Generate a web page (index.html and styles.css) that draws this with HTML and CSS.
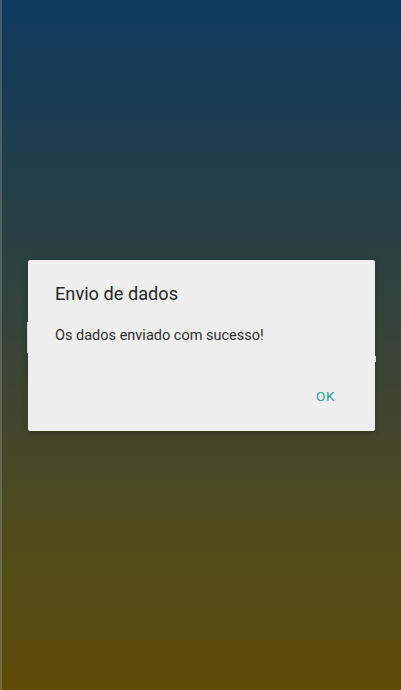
FILE: index.html
```html
<!DOCTYPE html>
<html lang="pt">
<head>
<meta charset="utf-8">
<title>Envio de dados</title>
<link rel="stylesheet" href="styles.css">
</head>
<body>
<main class="screen">
  <div class="field field-a"></div>
  <div class="field field-b"></div>
</main>
<div class="dialog" role="dialog">
  <h1 class="dialog-title">Envio de dados</h1>
  <p class="dialog-message">Os dados enviado com sucesso!</p>
  <div class="dialog-actions">
    <button class="dialog-button">OK</button>
  </div>
</div>
</body>
</html>
```
FILE: styles.css
```css
html, body {
  margin: 0;
  padding: 0;
  height: 100%;
}
body {
  font-family: Roboto, "Noto Sans", sans-serif;
  background: linear-gradient(to bottom, #0f3a5f 0%, #1d3d50 18%, #2b4240 38%, #3f4530 58%, #534c17 82%, #5f4b07 100%);
  box-shadow: inset 2px 0 0 rgba(160, 160, 160, 0.35);
  position: relative;
  overflow: hidden;
}
.screen {
  height: 100%;
  padding-top: 322px;
  box-sizing: border-box;
}
.field {
  background: #eeeeee;
}
.field-a {
  margin-left: 27px;
  width: 4px;
  height: 31px;
}
.field-b {
  margin-left: 372px;
  margin-top: 3px;
  width: 4px;
  height: 6px;
}
.dialog {
  position: absolute;
  left: 28px;
  top: 260px;
  width: 347px;
  height: 171px;
  background: #eeeeee;
  border-radius: 2px;
  box-shadow: 0 2px 6px rgba(0, 0, 0, 0.25);
  box-sizing: border-box;
  padding: 22px 27px 0 27px;
  display: flex;
  flex-direction: column;
}
.dialog-title {
  margin: 0;
  font-weight: 400;
  font-size: 18.2px;
  line-height: 24px;
  color: #262626;
}
.dialog-message {
  margin: 20px 0 0 0;
  font-size: 14.5px;
  line-height: 20px;
  color: #2e2e2e;
}
.dialog-actions {
  display: flex;
  justify-content: flex-end;
  margin-top: 42px;
  padding-right: 13px;
}
.dialog-button {
  background: none;
  border: none;
  padding: 0;
  font-family: Roboto, "Noto Sans", sans-serif;
  font-size: 13.5px;
  line-height: 16px;
  color: #22a094;
  letter-spacing: 0.6px;
}
```
